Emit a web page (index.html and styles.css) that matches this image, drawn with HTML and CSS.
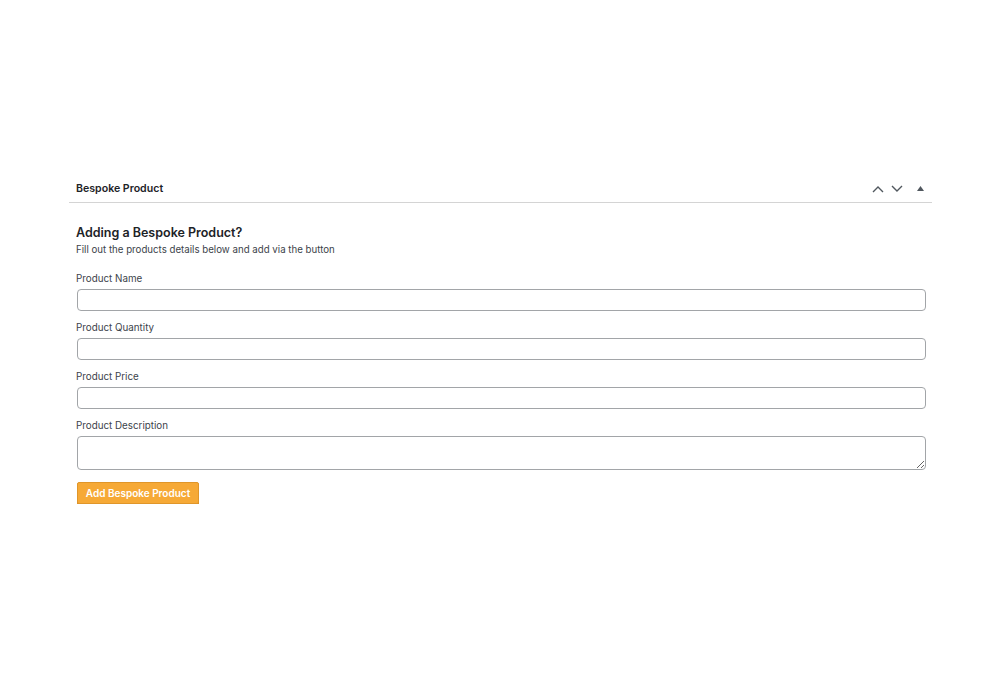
FILE: index.html
```html
<!DOCTYPE html>
<html>
<head>
<meta charset="utf-8">
<link rel="stylesheet" href="styles.css">
</head>
<body>
<div class="page">
  <div class="panel">
    <div class="panel-header">
      <h2 class="panel-title">Bespoke Product</h2>
      <div class="panel-actions">
        <svg class="chev" width="12" height="8" viewBox="0 0 12 8"><path d="M1 7 L6 2 L11 7" fill="none" stroke="#50575e" stroke-width="1.4"/></svg>
        <svg class="chev" width="12" height="8" viewBox="0 0 12 8"><path d="M1 1 L6 6 L11 1" fill="none" stroke="#50575e" stroke-width="1.4"/></svg>
        <svg class="tri" width="7" height="5" viewBox="0 0 7 5"><path d="M0 5 L3.5 0 L7 5 Z" fill="#50575e"/></svg>
      </div>
    </div>
    <div class="panel-body">
      <h3 class="heading">Adding a Bespoke Product?</h3>
      <p class="intro">Fill out the products details below and add via the button</p>
      <div class="field">
        <label class="label">Product Name</label>
        <input class="input" type="text">
      </div>
      <div class="field">
        <label class="label">Product Quantity</label>
        <input class="input" type="text">
      </div>
      <div class="field">
        <label class="label">Product Price</label>
        <input class="input" type="text">
      </div>
      <div class="field">
        <label class="label">Product Description</label>
        <textarea class="textarea"></textarea>
      </div>
      <button class="btn" type="button">Add Bespoke Product</button>
    </div>
  </div>
</div>
</body>
</html>
```
FILE: styles.css
```css
html, body {
  margin: 0;
  padding: 0;
  background: #ffffff;
}
body {
  font-family: Inter, "Liberation Sans", Arial, sans-serif;
  color: #1d2327;
}
.page {
  padding: 175px 68px 0 69px;
}
.panel {
  width: 863px;
}
.panel-header {
  display: flex;
  align-items: center;
  justify-content: space-between;
  height: 27px;
  border-bottom: 1px solid #d4d4d4;
  padding: 0 7px;
}
.panel-title {
  margin: 0;
  font-size: 10.6px;
  font-weight: 600;
  color: #1d2327;
}
.panel-actions {
  display: flex;
  align-items: center;
  gap: 7px;
  padding-right: 1px;
}
.chev { display: block; }
.tri { display: block; margin-left: 7px; }
.panel-body {
  padding: 22px 6px 0 7px;
}
.heading {
  margin: 0;
  font-size: 12.5px;
  font-weight: 600;
  color: #1d2327;
  line-height: 16px;
}
.intro {
  margin: 3px 0 0;
  font-size: 9.7px;
  line-height: 12px;
  color: #3c434a;
}
.field {
  margin-top: 17px;
  display: flex;
  flex-direction: column;
}
.field + .field {
  margin-top: 11px;
}
.label {
  font-size: 9.8px;
  line-height: 12px;
  color: #3c434a;
  margin-bottom: 4px;
}
.input {
  box-sizing: border-box;
  height: 22px;
  width: 849px;
  margin: 0 0 0 1px;
  border: 1px solid #a2a5a8;
  border-radius: 4px;
  background: #fff;
  padding: 0 6px;
  font: inherit;
}
.textarea {
  box-sizing: border-box;
  height: 34px;
  width: 849px;
  margin: 0 0 0 1px;
  border: 1px solid #a2a5a8;
  border-radius: 4px;
  background: #fff;
  padding: 4px 6px;
  font: inherit;
  resize: vertical;
}
.btn {
  margin: 12px 0 0 1px;
  width: 122px;
  height: 22px;
  background: #f6a936;
  border: 1px solid #e0962a;
  border-radius: 2px;
  color: #ffffff;
  font-family: Inter, "Liberation Sans", Arial, sans-serif;
  font-size: 10px;
  font-weight: 600;
  padding: 0;
  box-shadow: 0 1px 0 #d58a1d;
}
```
